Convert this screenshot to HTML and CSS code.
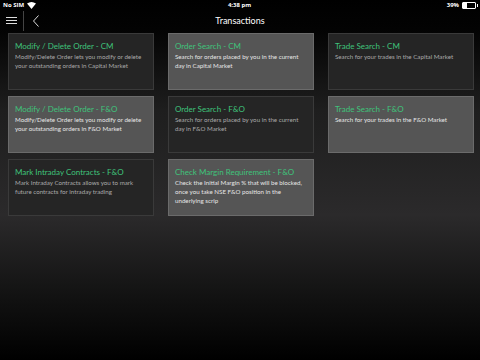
FILE: index.html
```html
<!DOCTYPE html>
<html lang="en">
<head>
  <meta charset="UTF-8">
  <title>Transactions</title>
  <link rel="stylesheet" href="styles.css">
</head>
<body>
  <div class="status-bar">
    <div class="carrier">No SIM
      <svg width="9" height="7" viewBox="0 0 9 7"><path d="M0 1.5 Q4.5 -1.5 9 1.5 L4.5 7 Z" fill="#fff"/></svg>
    </div>
    <div class="clock">4:38 pm</div>
    <div class="battery">39%
      <span class="batt"><span class="batt-level"></span></span>
    </div>
  </div>

  <div class="nav-bar">
    <div class="menu-btn">
      <span></span><span></span><span></span>
    </div>
    <div class="nav-sep"></div>
    <svg class="back" width="8" height="12" viewBox="0 0 8 12"><path d="M6.5 0.5 L1.5 6 L6.5 11.5" fill="none" stroke="#ddd" stroke-width="1"/></svg>
    <h1 class="title">Transactions</h1>
  </div>

  <div class="grid">
    <div class="card">
      <h2>Modify / Delete Order - CM</h2>
      <p>Modify/Delete Order lets you modify or delete your outstanding orders in Capital Market</p>
    </div>
    <div class="card light">
      <h2>Order Search - CM</h2>
      <p>Search for orders placed by you in the current day in Capital Market</p>
    </div>
    <div class="card">
      <h2>Trade Search - CM</h2>
      <p>Search for your trades in the Capital Market</p>
    </div>
    <div class="card light">
      <h2>Modify / Delete Order - F&amp;O</h2>
      <p>Modify/Delete Order lets you modify or delete your outstanding orders in F&amp;O Market</p>
    </div>
    <div class="card">
      <h2>Order Search - F&amp;O</h2>
      <p>Search for orders placed by you in the current day in F&amp;O Market</p>
    </div>
    <div class="card light">
      <h2>Trade Search - F&amp;O</h2>
      <p>Search for your trades in the F&amp;O Market</p>
    </div>
    <div class="card">
      <h2>Mark Intraday Contracts - F&amp;O</h2>
      <p>Mark Intraday Contracts allows you to mark future contracts for intraday trading</p>
    </div>
    <div class="card light">
      <h2>Check Margin Requirement - F&amp;O</h2>
      <p>Check the Initial Margin % that will be blocked, once you take NSE F&amp;O position in the underlying scrip</p>
    </div>
  </div>
</body>
</html>
```

FILE: styles.css
```css
html, body {
  height: 100%;
}
body {
  margin: 0;
  font-family: Lato, "Open Sans", sans-serif;
  color: #fff;
  background: linear-gradient(to bottom, #000 0px, #030303 30px, #1e1e1e 110px, #2b2a2b 215px, #111 300px, #000 360px);
  overflow: hidden;
}
.status-bar {
  height: 10px;
  display: flex;
  justify-content: space-between;
  align-items: center;
  padding: 0 4px 0 3px;
  font-size: 6px;
  font-weight: bold;
  font-family: "Open Sans", sans-serif;
}
.carrier, .battery {
  width: 60px;
  display: flex;
  align-items: center;
  gap: 3px;
}
.battery {
  justify-content: flex-end;
}
.batt {
  width: 12px;
  height: 5px;
  border: 1px solid #fff;
  border-radius: 1px;
  display: flex;
  position: relative;
}
.batt::after {
  content: "";
  position: absolute;
  right: -3px;
  top: 1px;
  width: 1px;
  height: 3px;
  background: #fff;
}
.batt-level {
  width: 4px;
  background: #fff;
}
.nav-bar {
  height: 21px;
  display: flex;
  align-items: center;
  position: relative;
}
.menu-btn {
  width: 23px;
  display: flex;
  flex-direction: column;
  align-items: center;
  gap: 2px;
}
.menu-btn span {
  width: 11px;
  height: 1px;
  background: #ddd;
}
.nav-sep {
  width: 1px;
  height: 20px;
  background: #444;
}
.back {
  margin-left: 8px;
}
.title {
  position: absolute;
  left: 0;
  right: 0;
  margin: 0;
  text-align: center;
  font-size: 9px;
  font-weight: normal;
  pointer-events: none;
}
.grid {
  display: grid;
  grid-template-columns: repeat(3, 146px);
  grid-auto-rows: 57px;
  column-gap: 14px;
  row-gap: 6px;
  padding: 2px 8px 0 8px;
}
.card {
  background: #252525;
  border: 1px solid #3a3a3a;
  padding: 7px 6px 4px;
  box-sizing: border-box;
}
.card.light {
  background: #555;
  border-color: #6b6b6b;
}
.card h2 {
  margin: 0 0 1px;
  font-size: 8px;
  line-height: 10px;
  font-weight: normal;
  color: #3fc37b;
  white-space: nowrap;
}
.card p {
  margin: 0;
  font-size: 6.2px;
  line-height: 9px;
  color: #aaa;
}
.card.light p {
  color: #e6e6e6;
}
```
